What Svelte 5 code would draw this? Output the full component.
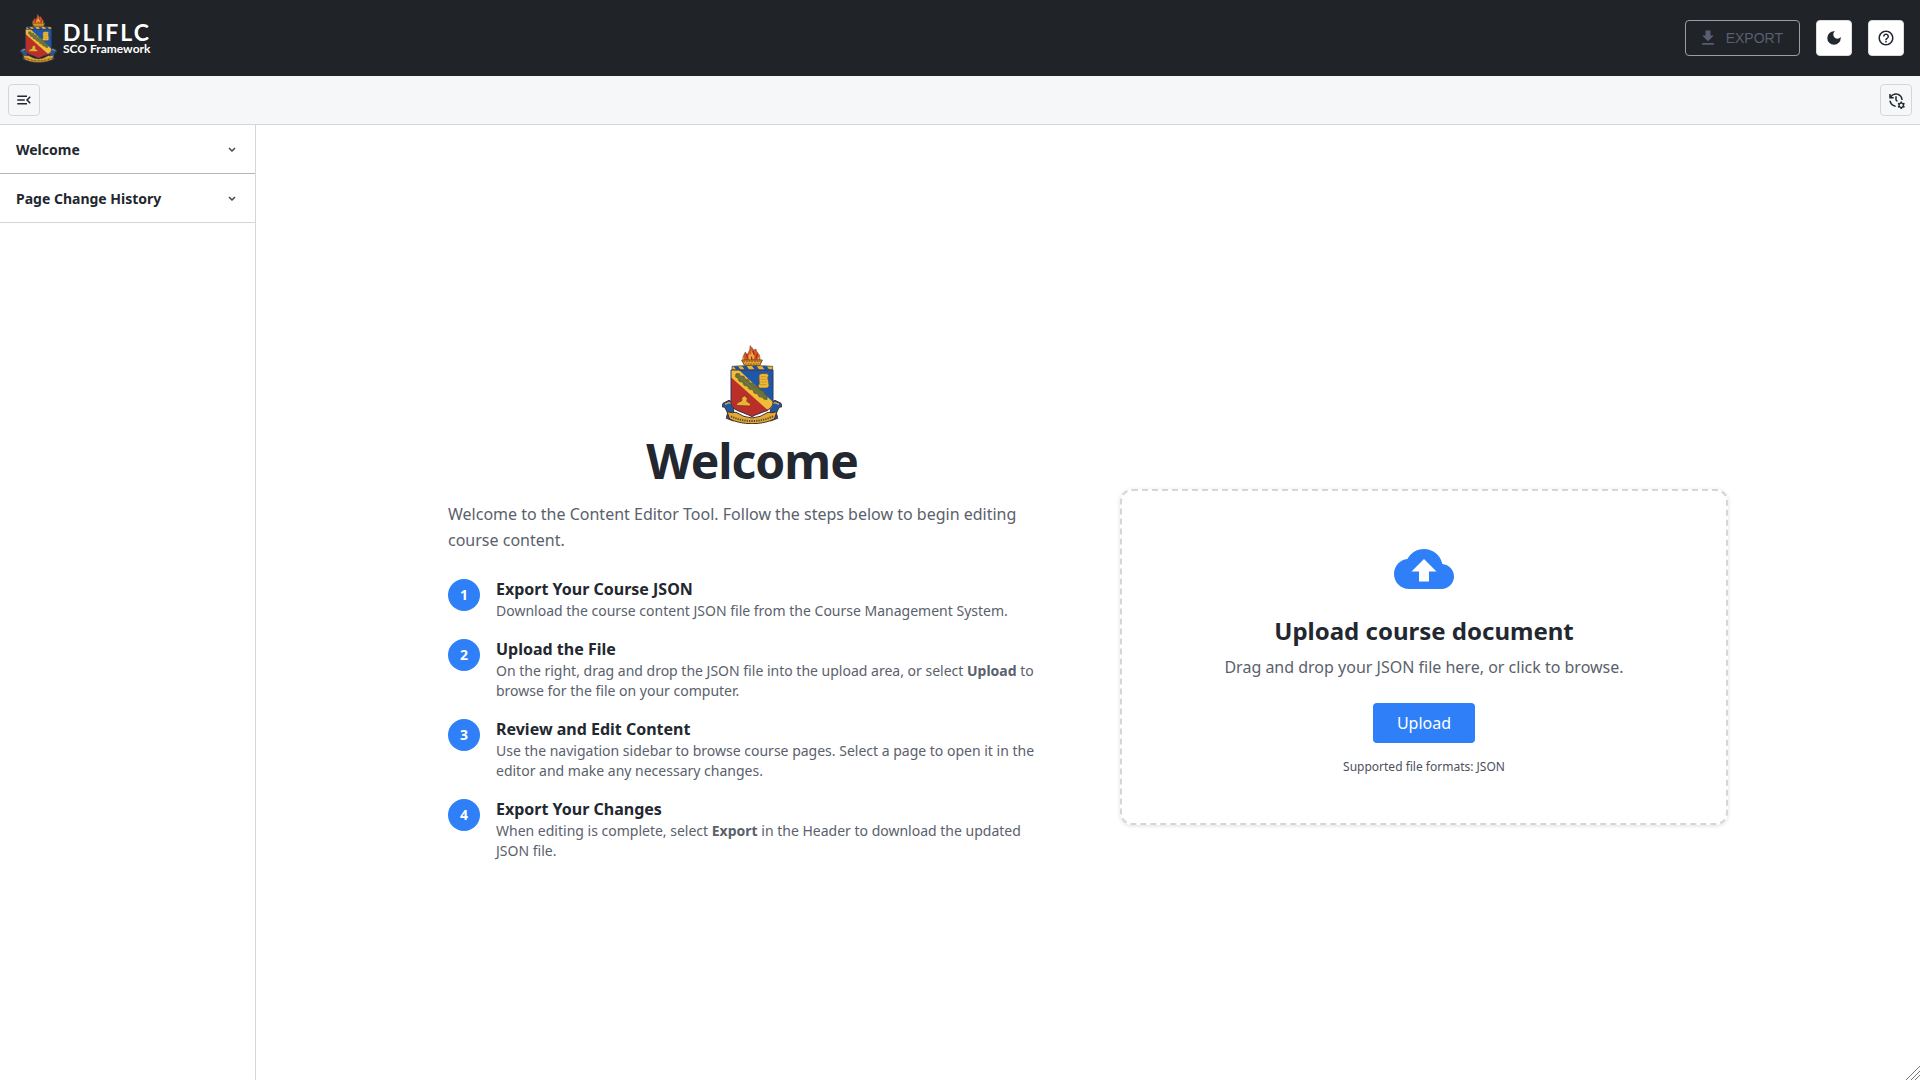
<script>
  const sections = ['Welcome', 'Page Change History'];
  const steps = [
    { title: 'Export Your Course JSON', text: ['Download the course content JSON file from the Course Management System.', '', ''] },
    { title: 'Upload the File', text: ['On the right, drag and drop the JSON file into the upload area, or select ', 'Upload', ' to browse for the file on your computer.'] },
    { title: 'Review and Edit Content', text: ['Use the navigation sidebar to browse course pages. Select a page to open it in the editor and make any necessary changes.', '', ''] },
    { title: 'Export Your Changes', text: ['When editing is complete, select ', 'Export', ' in the Header to download the updated JSON file.'] }
  ];
</script>

{#snippet crest(cls)}
  <svg class={cls} viewBox="0 0 180 240" aria-hidden="true">
    <!-- flame and bowl -->
    <path d="M84 5c6 5 9 9 11 14l7-4c-1 8 12 14 12 27 0 5-2 9-6 12H70c-6-4-8-10-6-17 2-6 4-8 6-13 2 4 3 6 6 7 5-8 9-14 8-26z" fill="#cf5a2c" stroke="#8a4a2c" stroke-width="2" />
    <path d="M89 18c1 9 9 12 8 24l-4 6H82c-6-8-1-15 2-20l3 6c2-6 0-10 2-16z" fill="#f0a93a" />
    <path d="M73 30l4 14M106 30l-4 14M92 20l5 12M88 38l2 10" stroke="#b5221d" stroke-width="4" fill="none" />
    <path d="M62 40l4 10M112 38l-5 12" stroke="#e8a035" stroke-width="4" fill="none" />
    <path d="M59 48h62l-8 17H68z" fill="#e0a32e" stroke="#6b4a1d" stroke-width="3" />
    <path d="M64 52h52M69 60h42" stroke="#a4501c" stroke-width="3" stroke-dasharray="5 3" />
    <!-- wreath -->
    <path d="M30 67q60-6 122 0v11H30z" fill="#e9b335" stroke="#3b3a3a" stroke-width="2" />
    <path d="M34 67h14l8 10H43zM60 66h14l8 11H68zM90 66h14l8 11H98zM120 66h14l8 11h-14z" fill="#1f4fa0" />
    <!-- scroll tails -->
    <path d="M3 178l18-9 14 8v30l14 10-14 14-22-8 4-17-9-16-8-2zM177 178l-18-9-14 8v30l-14 10 14 14 22-8-4-17 9-16 8-2z" fill="#24559f" stroke="#3b3430" stroke-width="3" />
    <path d="M9 181l12-5 10 4M171 181l-12-5-10 4" stroke="#e3ad33" stroke-width="4" fill="none" />
    <!-- shield -->
    <path d="M27 78h126v98c0 24-35 26-63 42-28-16-63-18-63-42z" fill="#1e56a8" />
    <path d="M27 94l112 106c-14 6-33 9-49 18-28-16-63-18-63-42z" fill="#bb2f29" />
    <path d="M27 78h24l102 96v4c0 10-6 16-15 21L27 100z" fill="#f3bc36" />
    <path d="M42 89l10 0 3 7 11 1 3 8 11 2 3 9 11 2 4 8 11 3 4 9 11 3 4 10 8 5-1 11-10-2-5-5-9-2-4-8-11-3-3-9-12-3-4-8-11-3-4-9-11-3-3-9-8-5z" fill="#69703c" stroke="#55592f" stroke-width="2" />
    <path d="M50 95l78 72" stroke="#837f47" stroke-width="2" />
    <path d="M111 94l6-5h19l4 6-3 5 4 25-5 7h-23l-5-6 4-6z" fill="#f0b938" stroke="#6a5426" stroke-width="2" />
    <path d="M116 98h17M115 106h18M115 114h19M114 122h20" stroke="#b2842e" stroke-width="2" />
    <path d="M42 184l5-8 12-5 1-11 9-5 7 9-2 8 12 8-2 6z" fill="#edb336" stroke="#743622" stroke-width="2" />
    <path d="M27 78h126v98c0 24-35 26-63 42-28-16-63-18-63-42z" fill="none" stroke="#33365a" stroke-width="3" />
    <!-- motto ribbon -->
    <path d="M15 203q17 5 27 2 24 16 48 17 24-1 48-17 10 3 27-2l-8 22q-28 14-67 14t-67-14z" fill="#e0a938" stroke="#49331f" stroke-width="3" />
    <path d="M27 217q29 14 63 14t63-14" fill="none" stroke="#604a2c" stroke-width="6" stroke-dasharray="4 3" />
  </svg>
{/snippet}

<div class="app">
  <header class="header">
    <div class="brand">
      {@render crest('crest-small')}
      <div class="brand-text">
        <span class="brand-name">DLIFLC</span>
        <span class="brand-sub">SCO Framework</span>
      </div>
    </div>
    <div class="actions">
      <button class="export" disabled>
        <svg viewBox="0 0 24 24" aria-hidden="true"><path d="M5 20h14v-2H5v2zM19 9h-4V3H9v6H5l7 7 7-7z" /></svg>
        EXPORT
      </button>
      <button class="square" aria-label="Dark mode">
        <svg viewBox="0 0 24 24" aria-hidden="true"><path d="M12 3a9 9 0 1 0 9 9c0-.46-.04-.92-.1-1.36a5.389 5.389 0 0 1-4.4 2.26 5.403 5.403 0 0 1-3.14-9.8c-.44-.06-.9-.1-1.36-.1z" /></svg>
      </button>
      <button class="square" aria-label="Help">
        <svg viewBox="0 0 24 24" aria-hidden="true"><path d="M11 18h2v-2h-2v2zm1-16C6.48 2 2 6.48 2 12s4.48 10 10 10 10-4.48 10-10S17.52 2 12 2zm0 18c-4.41 0-8-3.59-8-8s3.59-8 8-8 8 3.59 8 8-3.59 8-8 8zm0-14c-2.21 0-4 1.79-4 4h2c0-1.1.9-2 2-2s2 .9 2 2c0 2-3 1.75-3 5h2c0-2.25 3-2.5 3-5 0-2.21-1.79-4-4-4z" /></svg>
      </button>
    </div>
  </header>

  <div class="toolbar">
    <button class="tool" aria-label="Collapse sidebar">
      <svg viewBox="0 0 24 24" aria-hidden="true"><path d="M3 18h13v-2H3v2zm0-5h10v-2H3v2zm0-7v2h13V6H3zm18 9.59L17.42 12 21 8.41 19.59 7l-5 5 5 5L21 15.59z" /></svg>
    </button>
    <button class="tool" aria-label="Manage history">
      <svg viewBox="0 0 24 24" aria-hidden="true"><path d="M22.69 18.37l1.14-1-1-1.73-1.45.49c-.32-.27-.68-.48-1.08-.63L20 14h-2l-.3 1.49c-.4.15-.76.36-1.08.63l-1.45-.49-1 1.73 1.14 1c-.08.5-.08.76 0 1.26l-1.14 1 1 1.73 1.45-.49c.32.27.68.48 1.08.63L18 24h2l.3-1.49c.4-.15.76-.36 1.08-.63l1.45.49 1-1.73-1.14-1c.08-.51.08-.77 0-1.27zM19 21c-1.1 0-2-.9-2-2s.9-2 2-2 2 .9 2 2-.9 2-2 2zM11 7v5.41l2.36 2.36 1.04-1.79-1.4-1.39V7h-2zm10 5c0-4.97-4.03-9-9-9-2.83 0-5.35 1.32-7 3.36V4H3v6h6V8H6.26C7.53 6.19 9.63 5 12 5c3.86 0 7 3.14 7 7h2zm-10.14 6.91c-2.99-.49-5.35-2.9-5.78-5.91H3.06c.5 4.5 4.31 8 8.94 8h.07l-1.21-2.09z" /></svg>
    </button>
  </div>

  <div class="body">
    <nav class="sidebar">
      {#each sections as section}
        <button class="section">
          {section}
          <svg viewBox="0 0 14 14" aria-hidden="true"><path d="M4 5l3 3 3-3" /></svg>
        </button>
      {/each}
    </nav>

    <main class="main">
      <div class="columns">
        <section class="intro">
          {@render crest('crest-large')}
          <h1>Welcome</h1>
          <p class="lead">Welcome to the Content Editor Tool. Follow the steps below to begin editing course content.</p>
          <ol class="steps">
            {#each steps as step, i}
              <li>
                <span class="number">{i + 1}</span>
                <div>
                  <h2>{step.title}</h2>
                  <p>{step.text[0]}{#if step.text[1]}<strong>{step.text[1]}</strong>{/if}{step.text[2]}</p>
                </div>
              </li>
            {/each}
          </ol>
        </section>

        <section class="card">
          <svg class="cloud" viewBox="0 0 24 24" aria-hidden="true"><path d="M19.35 10.04C18.67 6.59 15.64 4 12 4 9.11 4 6.6 5.64 5.35 8.04 2.34 8.36 0 10.91 0 14c0 3.31 2.69 6 6 6h13c2.76 0 5-2.24 5-5 0-2.64-2.05-4.78-4.65-4.96zM14 13v4h-4v-4H7l5-5 5 5h-3z" /></svg>
          <h2>Upload course document</h2>
          <p>Drag and drop your JSON file here, or click to browse.</p>
          <button class="upload">Upload</button>
          <small>Supported file formats: JSON</small>
        </section>
      </div>
      <svg class="grip" viewBox="0 0 15 15" aria-hidden="true"><path d="M1 15L15 1M6 15l9-9M10 15l5-5" /></svg>
    </main>
  </div>
</div>

<style>
  :global(body) { margin: 0; }
  .app {
    display: flex;
    flex-direction: column;
    min-height: 100vh;
    background: #fff;
    color: #23272f;
    font-family: 'Noto Sans', 'Open Sans', sans-serif;
    font-size: 16px;
    line-height: 24px;
  }
  .app :is(h1, h2, p, ol) { margin: 0; padding: 0; }
  button { font: inherit; color: inherit; box-sizing: border-box; padding: 0; cursor: pointer; }

  .header {
    display: flex;
    align-items: center;
    justify-content: space-between;
    height: 76px;
    padding: 0 16px 0 20px;
    background: #202328;
    color: #fff;
  }
  .brand { display: flex; align-items: center; gap: 6px; }
  .crest-small { width: 37px; height: 50px; }
  .brand-text { display: flex; flex-direction: column; padding-top: 2px; font-family: Lato, sans-serif; font-weight: 700; }
  .brand-name { font-size: 23px; line-height: 20px; letter-spacing: 2px; }
  .brand-sub { font-size: 12px; line-height: 14px; }
  .actions { display: flex; gap: 16px; }
  .actions button { height: 36px; border-radius: 4px; }
  .export {
    display: flex;
    align-items: center;
    gap: 8px;
    padding: 0 16px 0 12px;
    border: 1px solid #9b9da1;
    background: transparent;
    color: #5a5e70;
    font: 14px 'Liberation Sans', Arial, sans-serif;
  }
  .export svg { width: 20px; height: 20px; fill: currentColor; }
  .square, .tool { display: flex; align-items: center; justify-content: center; }
  .square { width: 36px; border: 1px solid #dcdcdc; background: #fff; color: #23272f; }
  .square svg, .tool svg { width: 18px; height: 18px; fill: currentColor; }

  .toolbar {
    display: flex;
    justify-content: space-between;
    padding: 8px;
    border-bottom: 1px solid #d6d6d8;
    background: #f6f7f9;
  }
  .tool { width: 32px; height: 32px; border: 1px solid #d6d6d8; border-radius: 4px; background: transparent; }

  .body { display: flex; flex: 1; }
  .sidebar { width: 255px; flex: none; border-right: 1px solid #d6d6d8; }
  .section {
    display: flex;
    align-items: center;
    justify-content: space-between;
    width: 100%;
    height: 49px;
    padding: 1px 16px 0;
    border: 0;
    border-bottom: 1px solid #d6d6d8;
    background: #fff;
    font-size: 14px;
    font-weight: 700;
  }
  .section:first-child { border-bottom-color: #b4b5b8; }
  .section svg { width: 14px; height: 14px; fill: none; stroke: #3f4652; stroke-width: 1.5; }

  .main { position: relative; display: flex; flex: 1; align-items: center; justify-content: center; }
  .columns {
    display: grid;
    grid-template-columns: 1fr 1fr;
    gap: 64px;
    align-items: center;
    width: 100%;
    max-width: 1280px;
  }
  .intro { display: flex; flex-direction: column; }
  .crest-large { width: 60px; height: 80px; align-self: center; }
  .intro h1 { margin-top: 8px; font-size: 48px; line-height: 58px; letter-spacing: -1px; text-align: center; }
  .intro .lead { margin: 11px 0 24px; line-height: 26px; color: #5a616c; }
  .steps { display: flex; flex-direction: column; gap: 16px; list-style: none; }
  .steps li { display: flex; gap: 16px; }
  .number {
    flex: none;
    width: 32px;
    height: 32px;
    margin-top: 2px;
    border-radius: 50%;
    background: #2f80f8;
    color: #fff;
    font-size: 14px;
    font-weight: 700;
    line-height: 32px;
    text-align: center;
  }
  .steps h2 { font-size: 16px; font-weight: 700; line-height: 24px; }
  .steps p { font-size: 14px; line-height: 20px; color: #5a616c; }

  .card {
    display: flex;
    flex-direction: column;
    align-items: center;
    margin-top: 108px;
    padding: 48px;
    border: 2px dashed #d6d6d8;
    border-radius: 12px;
    box-shadow: 0 1px 4px rgba(0, 0, 0, 0.12);
    text-align: center;
  }
  .cloud { width: 60px; height: 60px; fill: #2f80f8; }
  .card h2 { margin: 16px 0 8px; font-size: 24px; font-weight: 700; line-height: 32px; }
  .card p { color: #5a616c; }
  .card .upload {
    height: 40px;
    margin: 24px 0 16px;
    padding: 0 24px;
    border: 0;
    border-radius: 4px;
    background: #2f80f8;
    color: #fff;
  }
  .card small { font-size: 12px; line-height: 16px; color: #4b515b; }
  .grip { position: absolute; right: 0; bottom: 0; width: 15px; height: 15px; fill: none; stroke: #777; }
</style>
